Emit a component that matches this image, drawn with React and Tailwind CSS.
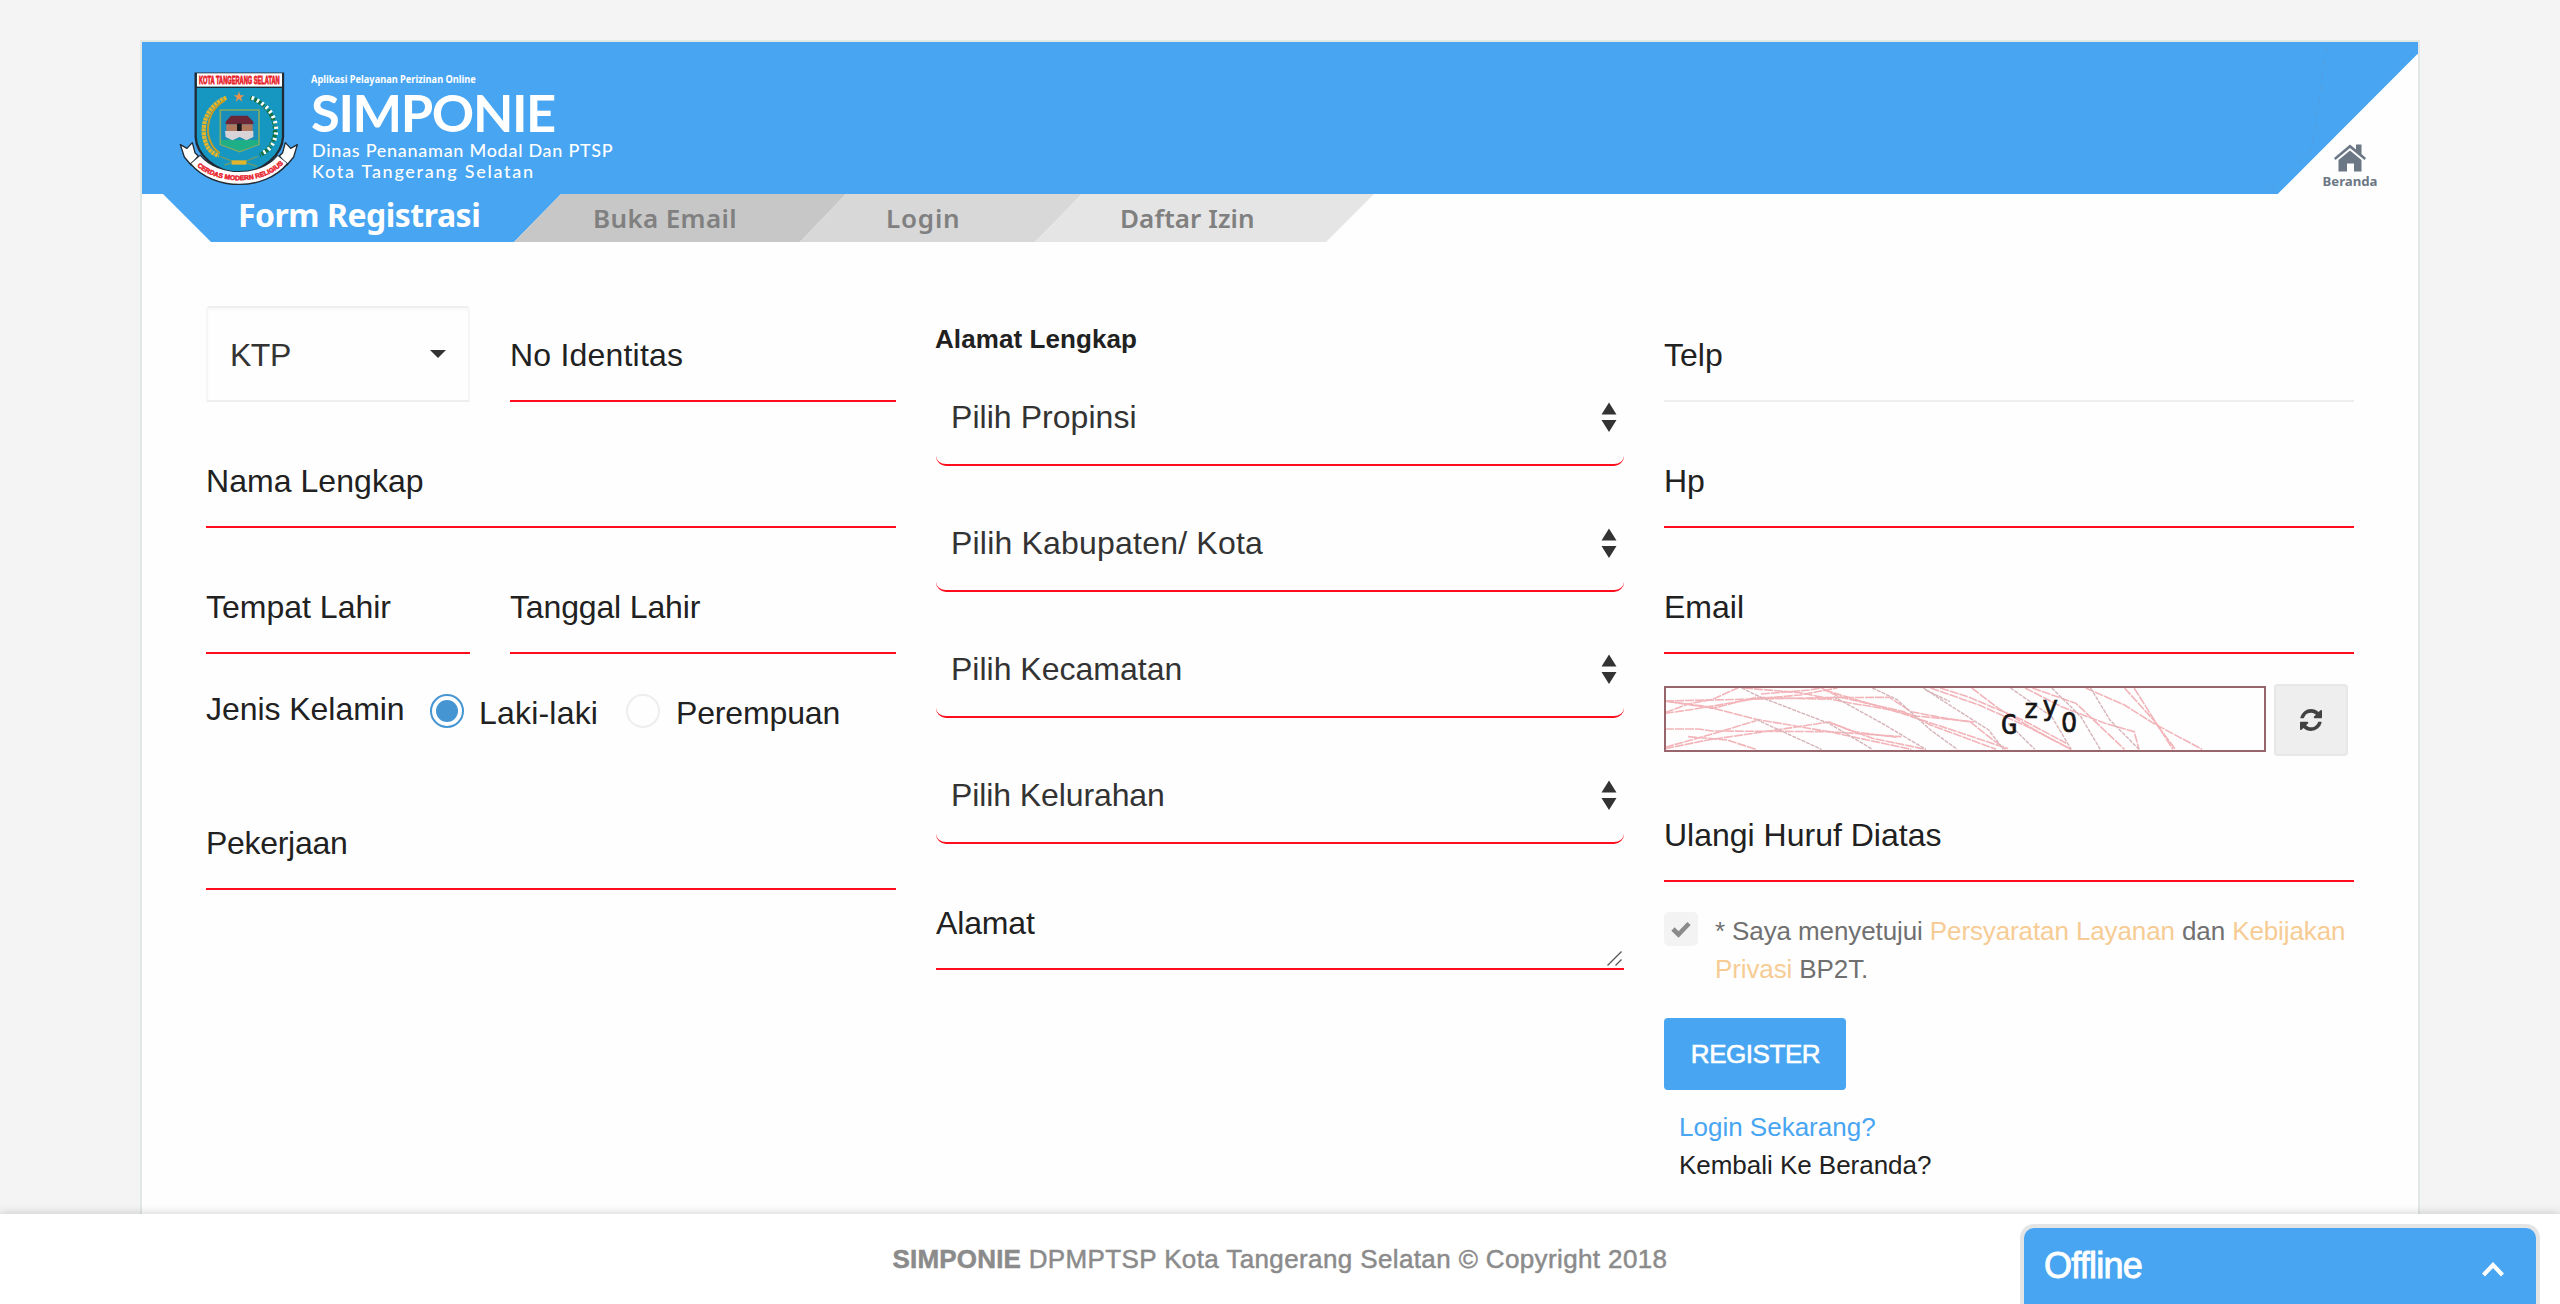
import React from "react";

const red = "border-[#ff0d1c]";

function Field({ label, className = "", line = red, tracking = "" }) {
  return (
    <div className={`h-24 border-b-2 pt-[31px] ${line} ${className}`}>
      <span className={`block whitespace-nowrap leading-9 ${tracking}`}>{label}</span>
    </div>
  );
}

function SelectField({ label, tracking = "" }) {
  return (
    <div className={`flex h-24 items-start justify-between rounded-[10px] border-b-2 pl-[15px] pr-[7px] text-[#333] ${red}`}>
      <span className={`pt-[29px] leading-9 ${tracking}`}>{label}</span>
      <svg className="mt-[31px] h-8 w-4" viewBox="0 0 16 32" fill="#333">
        <path d="M8 1.500L15.500 13.500H0.500zM8 31L15.500 19H0.500z" />
      </svg>
    </div>
  );
}

function Radio({ checked }) {
  return checked ? (
    <span className="flex size-[34px] items-center justify-center rounded-full border-2 border-[#4495d1]">
      <span className="size-[22px] rounded-full bg-[#4495d1]" />
    </span>
  ) : (
    <span className="size-[34px] rounded-full border-2 border-[#eee]" />
  );
}

function Crest() {
  return (
    <svg className="h-[118px] w-[120px]" viewBox="148 120 360 354">
      {/* Ribbon ends */}
      <g fill="#fff" stroke="#222b33" strokeWidth="4" strokeLinejoin="round">
        <path d="M152 341L172 352L188 335L196 365L206 375L184 402L164 378Z" />
        <path d="M503 341L483 352L467 335L459 365L449 375L472 402L492 378Z" />
      </g>
      {/* Shield */}
      <path d="M198 128H460V318C458 372 400 422 329 428C258 422 200 372 198 318Z" fill="#1697c1" stroke="#222b33" strokeWidth="7" />
      <rect x="202" y="127" width="255" height="40" fill="#fff" />
      <path d="M198 169H460" stroke="#222b33" strokeWidth="4" />
      <text transform="translate(208 158) scale(1 1.950)" textLength="242" lengthAdjust="spacingAndGlyphs" fontFamily="'Liberation Sans', sans-serif" fontWeight="700" fontSize="16" fill="#e8232c" stroke="#e8232c" strokeWidth="1.200">KOTA TANGERANG SELATAN</text>
      {/* Rice and cotton wreath */}
      <path d="M290 200C238 222 215 270 224 320C230 350 246 368 268 374" fill="none" stroke="#e2b52c" strokeWidth="13" strokeDasharray="9 2" />
      <path d="M286 208C248 228 230 270 236 312C242 340 252 355 270 366" fill="none" stroke="#c49c26" strokeWidth="6" />
      <path d="M362 200C412 218 440 262 436 308C430 342 414 362 390 372" fill="none" stroke="#16713c" strokeWidth="13" strokeDasharray="9 4" />
      <path d="M366 200C416 220 444 262 439 308C434 340 418 358 398 366" fill="none" stroke="#fff" strokeWidth="12" strokeDasharray="7 10" />
      <path d="M272 376L310 392M346 392L384 376M284 402L310 394M346 394L382 406" stroke="#6a9a70" strokeWidth="4" />
      <rect x="306" y="388" width="44" height="13" fill="#e2b52c" />
      <path d="M328 181L332 193L344 193L334 200L338 212L328 204L318 212L322 200L312 193L324 193Z" fill="#e8924e" />
      {/* Inner emblem */}
      <path d="M272 237H388V340L330 362L272 340Z" fill="#1b8dba" stroke="#83aa63" strokeWidth="5" />
      <path d="M274 326H386V340L330 360L274 340Z" fill="#1faf86" />
      <path d="M304 254H354L371 272V280H288V272Z" fill="#6b2638" />
      <rect x="290" y="280" width="79" height="20" fill="#b0785c" />
      <rect x="322" y="278" width="14" height="22" fill="#1d1a1c" />
      <path d="M286 300H371V318L350 328L330 318L308 328L288 318Z" fill="#d7d3d6" />
      {/* Motto ribbon */}
      <path d="M196 385C258 460 400 460 460 385" fill="none" stroke="#222b33" strokeWidth="42" />
      <path d="M198 386C260 459 398 459 458 386" fill="none" stroke="#fff" strokeWidth="35" />
      <path id="motto" d="M196 400C262 464 398 464 462 398" fill="none" />
      <text fontFamily="'Liberation Sans', sans-serif" fontWeight="700" fontSize="20" fill="#e8232c" stroke="#e8232c" strokeWidth="1.500">
        <textPath href="#motto" startOffset="8" textLength="282" lengthAdjust="spacingAndGlyphs">CERDAS MODERN RELIGIUS</textPath>
      </text>
    </svg>
  );
}

function Banner() {
  return (
    <header className="relative h-[200px]">
      <div className="flex h-[152px] bg-[#47a5f2] [clip-path:polygon(0_0,100%_0,100%_11.500px,2135.700px_152px,0_152px)]">
        <div className="pl-[37px] pt-[29px]">
          <Crest />
        </div>
        <div className="w-[320px] pl-3 pt-[30px] font-[Lato,sans-serif] text-white">
          <p className="h-[14px] w-[210px] origin-left scale-x-[0.84] whitespace-nowrap font-['Noto_Sans',sans-serif] text-[11px] font-bold leading-[14px]">Aplikasi Pelayanan Perizinan Online</p>
          <p className="h-[52px] whitespace-nowrap text-[52.500px] font-bold leading-[52px] tracking-[-1.400px]">SIMPONIE</p>
          <p className="mt-[2px] h-[21px] whitespace-nowrap pl-px text-[18px] font-medium leading-[21px] tracking-[0.720px]">Dinas Penanaman Modal Dan PTSP</p>
          <p className="h-[21px] whitespace-nowrap pl-px text-[18px] font-medium leading-[21px] tracking-[1.720px]">Kota Tangerang Selatan</p>
        </div>
        <svg className="ml-auto h-[152px] w-[160px]" viewBox="2258 42 160 152" fill="none" stroke="#5b9bd0" strokeWidth="1">
          <path d="M2327 46L2311 152L2267 193" strokeDasharray="7 6" opacity="0.6" />
        </svg>
      </div>
      <nav className="flex h-12 font-['Noto_Sans',sans-serif] text-[26px] font-semibold leading-[48px] text-[#808080]">
        <div className="ml-[21px] w-[398px] bg-[#47a5f2] pl-[75px] text-[32px] font-bold leading-[41px] tracking-[-0.500px] text-white [clip-path:polygon(0_0,100%_0,351px_100%,48px_100%)]">Form Registrasi</div>
        <div className="-ml-[47px] w-[332px] bg-[#c7c7c7] pl-[79px] tracking-[0.350px] [clip-path:polygon(47px_0,100%_0,286px_100%,0_100%)]">Buka Email</div>
        <div className="-ml-[46px] w-[282px] bg-[#d8d8d8] pl-[86px] tracking-[0.800px] [clip-path:polygon(46px_0,100%_0,235px_100%,0_100%)]">Login</div>
        <div className="-ml-[47px] w-[339px] bg-[#e5e5e5] pl-[85px] tracking-[0.080px] [clip-path:polygon(47px_0,100%_0,291px_100%,0_100%)]">Daftar Izin</div>
      </nav>
      <div className="absolute right-[39px] top-[101px] flex w-[58px] flex-col items-center">
        <svg className="h-[30px] w-[34px]" viewBox="0 0 34 30" fill="#6b7785">
          <path d="M1 15L17 1.500L23 6.500V1.500H28.500V11L33 15L31.500 17L17 5L2.500 17Z" />
          <path d="M5.500 17L17 7.500L28.500 17V28.500H21V20.500H14V28.500H5.500Z" />
        </svg>
        <span className="-mt-px font-['Noto_Sans',sans-serif] text-[13.200px] font-bold leading-[18px] text-[#6b7785]">Beranda</span>
      </div>
    </header>
  );
}

const scribbles = [
  "M52 123L210 118L380 113L515 112L560 155L620 172L682 186L720 230L755 268",
  "M52 123L140 140L240 178L390 215L470 240L560 268",
  "M52 160L110 148L230 118L330 105L408 84",
  "M52 158L100 132L150 118L205 82",
  "M215 84L330 98L430 128L520 150L570 168L640 178L690 186",
  "M375 84L410 110L500 140L545 155L600 195L735 268",
  "M250 102L350 90L380 82",
  "M60 125L150 145L240 112L390 118",
  "M380 90L540 160L640 208L760 266",
  "M52 207L120 207L150 213L390 215L540 230",
  "M52 262L150 222L240 182",
  "M52 266L140 240L300 206L390 186L440 215L530 232",
  "M100 230L180 240L240 268",
  "M390 186L480 235L590 268",
  "M600 84L700 135L800 200L890 268",
  "M620 84L680 112L790 180L880 250",
  "M685 84L740 145L830 222L890 268",
  "M795 84L870 140L960 190L1020 215L1030 268",
  "M810 84L900 130L1000 268",
  "M920 84L1000 135L1060 190L1160 268",
  "M1000 84L1060 180L1105 268",
  "M1020 84L1070 200L1100 268",
];
const thinScribbles = [
  "M210 84L250 112L390 190L480 268",
  "M240 178L310 225L375 268",
  "M400 110L500 190L590 268",
  "M480 84L530 118L600 210L655 268",
  "M585 84L655 150L720 210L750 268",
  "M590 90L640 125",
  "M765 84L850 170L890 268",
  "M850 84L910 170L950 268",
  "M760 190L815 268",
  "M930 84L970 180L1030 268",
];

function Captcha() {
  return (
    <svg className="mt-[2px] h-[66px] w-[602px] border-2 border-[#97656b]" viewBox="2 2 598 62">
      <g transform="scale(0.4847 0.3333) translate(-50 -78)" fill="none">
        {scribbles.map((d) => (
          <path key={d} d={d} stroke="#f2b4b9" strokeWidth="1.600" strokeDasharray="9 1" vectorEffect="non-scaling-stroke" />
        ))}
        {thinScribbles.map((d) => (
          <path key={d} d={d} stroke="#d6b4b9" strokeWidth="1.400" strokeDasharray="4 1" vectorEffect="non-scaling-stroke" />
        ))}
      </g>
      <g fontFamily="'DejaVu Sans Mono', monospace" fontSize="27" fill="#151515" stroke="#151515" strokeWidth="0.600">
        <text x="337" y="47.500">G</text>
        <text x="359" y="31.500">z</text>
        <text x="378" y="29">y</text>
        <text x="397" y="45.500">0</text>
      </g>
      <circle cx="405" cy="35.600" r="3.500" fill="#fffafa" />
    </svg>
  );
}

export default function App() {
  return (
    <div className="relative flex h-[1304px] flex-col overflow-hidden bg-[#f4f4f4] font-['Liberation_Sans',Arial,sans-serif] text-[32px] text-[#212121]">
      <main className="min-h-0 flex-1 px-[140px] pt-10">
        <div className="h-[1174px] border-2 border-b-0 border-[#e2e8e6] bg-[#fefefe]">
          <Banner />
          <form className="flex items-start pl-16 pt-16">
            <section className="mr-10 w-[690px]">
              <div className="flex gap-10">
                <div className="flex h-24 w-[264px] justify-between rounded-t-[4px] border-2 border-x-[#f6f6f6] border-t-[#efefef] border-b-[#eee] px-[22px] text-[#333] shadow-[inset_0_2px_2px_#f8f8f8]">
                  <span className="pt-[29px] leading-9 tracking-[-0.500px]">KTP</span>
                  <svg className="mt-[42px] h-2 w-4" viewBox="0 0 16 8" fill="#333"><path d="M0 0H16L8 8z" /></svg>
                </div>
                <Field label="No Identitas" className="w-[386px]" tracking="tracking-[0.200px]" />
              </div>
              <Field label="Nama Lengkap" className="mt-[30px]" tracking="tracking-[0.050px]" />
              <div className="mt-[30px] flex gap-10">
                <Field label="Tempat Lahir" className="w-[264px]" />
                <Field label="Tanggal Lahir" className="w-[386px]" tracking="tracking-[-0.150px]" />
              </div>
              <div className="flex h-[140px] items-start pt-10">
                <span className="-mt-[3px] w-[224px] leading-9 tracking-[-0.050px]">Jenis Kelamin</span>
                <Radio checked />
                <span className="ml-[15px] mt-px w-[147px] leading-9 tracking-[0.200px]">Laki-laki</span>
                <Radio />
                <span className="ml-4 mt-px leading-9 tracking-[-0.150px]">Perempuan</span>
              </div>
              <Field label="Pekerjaan" tracking="tracking-[-0.300px]" />
            </section>

            <section className="mr-10 w-[688px]">
              <h2 className="-ml-px h-16 pt-[18px] text-[26px] font-bold leading-[30px] tracking-[0.080px]">Alamat Lengkap</h2>
              <div className="flex flex-col gap-[30px]">
                <SelectField label="Pilih Propinsi" tracking="tracking-[0.050px]" />
                <SelectField label="Pilih Kabupaten/ Kota" tracking="tracking-[0.200px]" />
                <SelectField label="Pilih Kecamatan" />
                <SelectField label="Pilih Kelurahan" tracking="tracking-[-0.100px]" />
                <div className="relative">
                  <Field label="Alamat" tracking="tracking-[-0.150px]" />
                  <svg className="absolute bottom-[4px] right-[2px] size-[15px]" viewBox="0 0 15 15" stroke="#555" strokeWidth="1.300">
                    <path d="M0.500 14.500L14.500 0.500M8.500 14.500L14.500 8.500" />
                  </svg>
                </div>
              </div>
            </section>

            <section className="w-[690px]">
              <Field label="Telp" line="border-[#eee]" />
              <Field label="Hp" className="mt-[30px]" />
              <Field label="Email" className="mt-[30px]" />
              <div className="mt-[30px] flex h-[72px] items-start gap-2">
                <Captcha />
                <button type="button" className="flex h-[72px] w-[74px] items-center justify-center rounded-[4px] border-2 border-[#e7e7e7] bg-[#eee]">
                  <svg className="size-[22px]" viewBox="0 0 1536 1536" fill="#424242">
                    <path d="M1511 928q0 5-1 7-64 268-268 434.500T764 1536q-146 0-282.500-55T238 1324l-129 129q-19 19-45 19t-45-19-19-45V960q0-26 19-45t45-19h448q26 0 45 19t19 45-19 45l-137 137q71 66 161 102t187 36q134 0 250-65t186-179q11-17 53-117 8-23 30-23h192q13 0 22.500 9.500t9.500 22.500zM1536 128v448q0 26-19 45t-45 19H1024q-26 0-45-19t-19-45 19-45l138-138Q969 256 768 256q-134 0-250 65T332 500q-11 17-53 117-8 23-30 23H50q-13 0-22.500-9.500T18 608v-7q65-268 270-434.500T768 0q146 0 284 55.500T1297 212l130-129q19-19 45-19t45 19 19 45z" />
                  </svg>
                </button>
              </div>
              <Field label="Ulangi Huruf Diatas" className="mt-[30px]" />
              <div className="flex pt-[30px] text-[26px] text-[#707070]">
                <span className="flex h-[34px] w-[34px] shrink-0 items-center justify-center rounded-[5px] bg-[#f3f3f3]">
                  <svg className="size-5" viewBox="0 0 20 16" fill="none" stroke="#8b8b8b" strokeWidth="4.600"><path d="M2 8L7.500 13.500L18 2.500" /></svg>
                </span>
                <p className="ml-[17px] whitespace-nowrap leading-[38px] tracking-[-0.110px]">
                  * Saya menyetujui <a className="text-[#f6cc94]">Persyaratan Layanan</a> dan <a className="text-[#f6cc94]">Kebijakan<br />Privasi</a> BP2T.
                </p>
              </div>
              <button type="button" className="mt-[30px] flex h-[72px] w-[182px] items-center justify-center rounded-[4px] bg-[#47a5f2] pl-px pt-px text-[26px] tracking-[-0.450px] text-white [-webkit-text-stroke:0.600px_#fff]">REGISTER</button>
              <div className="pl-[15px] pt-[18px] text-[26px] leading-[38px]">
                <a className="block text-[#47a5f2]">Login Sekarang?</a>
                <a className="block tracking-[-0.030px]">Kembali Ke Beranda?</a>
              </div>
            </section>
          </form>
        </div>
      </main>

      <footer className="relative h-[90px] bg-white pt-7 text-center text-[26px] leading-[34px] tracking-[0.380px] text-[#8b8b8b] shadow-[0_0_10px_rgba(0,0,0,0.200)] [-webkit-text-stroke:0.500px_#8b8b8b]">
        <strong className="tracking-[0.170px]">SIMPONIE</strong> DPMPTSP Kota Tangerang Selatan © Copyright 2018
      </footer>

      <div className="absolute bottom-0 right-6 flex h-[76px] w-[512px] items-start justify-between rounded-t-[10px] bg-[#47a5f2] pl-5 pr-8 text-white shadow-[0_0_0_4px_rgba(0,0,0,0.100)]">
        <span className="pt-[18px] text-[36px] leading-10 tracking-[-0.750px] [-webkit-text-stroke:0.900px_#fff]">Offline</span>
        <svg className="mt-[34px] h-[15px] w-[22px]" viewBox="0 0 22 15" fill="none" stroke="#fff" strokeWidth="4.200"><path d="M1.500 13L11 3L20.500 13" /></svg>
      </div>
    </div>
  );
}
